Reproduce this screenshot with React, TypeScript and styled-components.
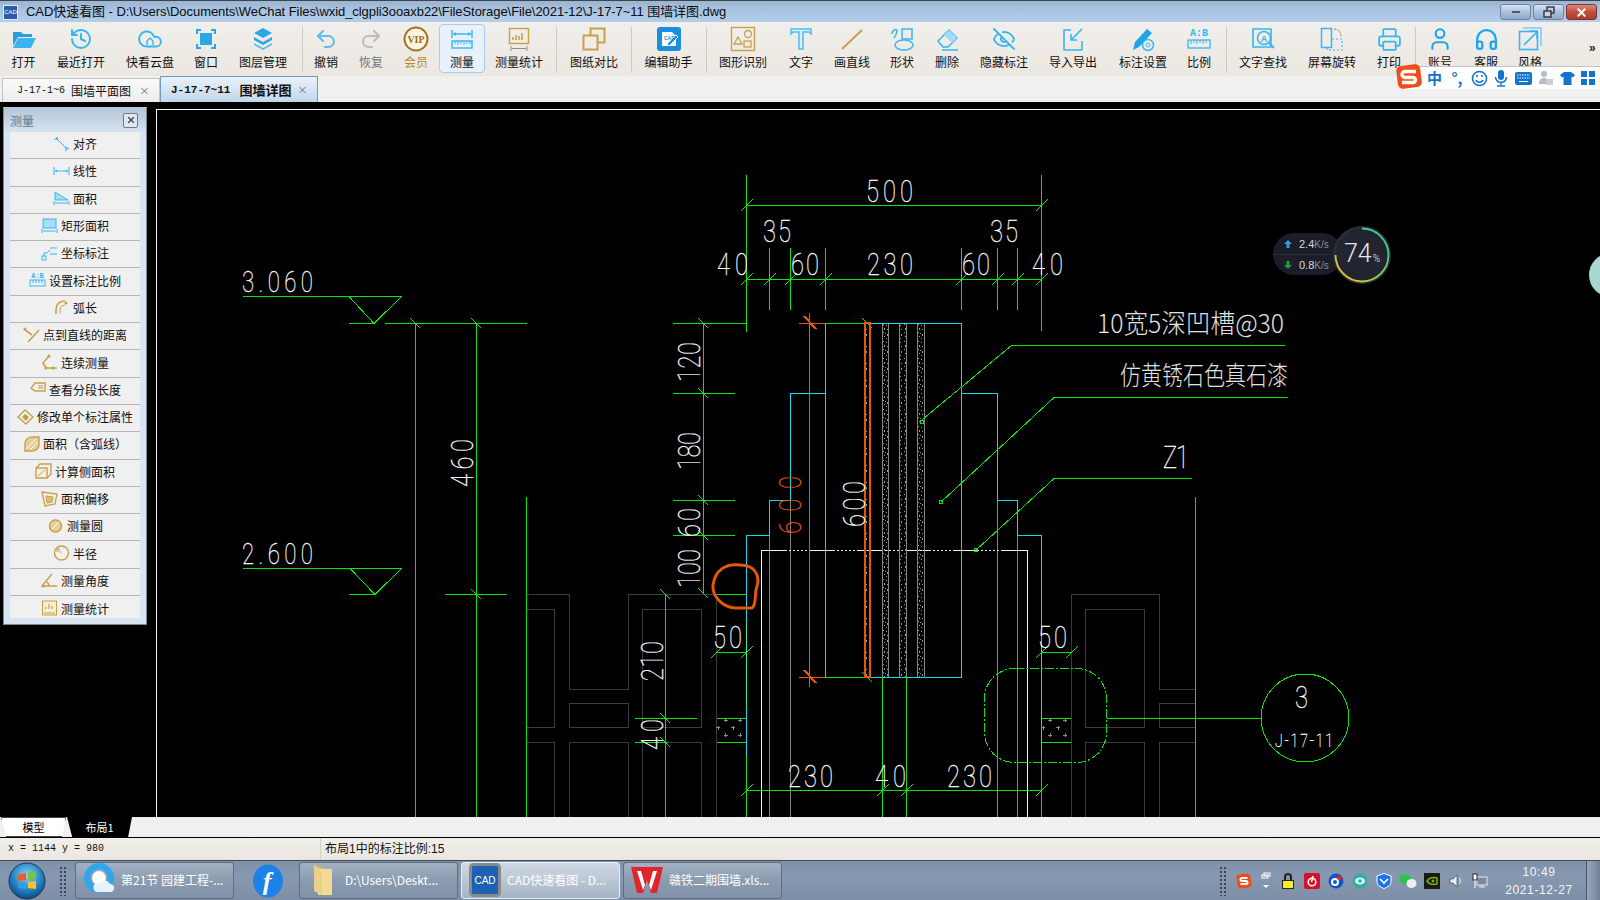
import React from 'react';
import styled, { createGlobalStyle } from 'styled-components';
import { History, Undo2, Redo2, EyeOff, Printer, User, Headphones, Cloud, X, Minus } from 'lucide-react';

const CJK = `"Noto Sans CJK SC", "Liberation Sans", sans-serif`;
const LATIN = `"Liberation Sans", "Noto Sans CJK SC", sans-serif`;
const MONO = `"Liberation Mono", "Noto Sans CJK SC", monospace`;
const B = '#36b6f3';
const G = '#c8a04a';

const Global = createGlobalStyle`
  html, body { margin: 0; padding: 0; background: #000; }
  * { box-sizing: border-box; }
`;

const Page = styled.div`
  position: relative; width: 1600px; height: 900px; overflow: hidden;
  display: flex; flex-direction: column; font-family: ${CJK}; background: #000;
`;

/* ---------- title bar ---------- */
const TitleBar = styled.div`
  height: 22px; flex: none; display: flex; align-items: center; padding: 1px 3px 0 3px;
  border-top: 1px solid #3c4450;
  background: linear-gradient(#9cb5d0, #a8c4e2 45%, #b4cde8);
`;
const TitleIcon = styled.div`
  width: 15px; height: 15px; flex: none; background: #2c5da8; border: 1px solid #dfe8f4; color: #fff;
  font: 6px/13px ${LATIN}; text-align: center;
`;
const TitleText = styled.div`
  margin-left: 8px; font: 13px/18px ${LATIN}; letter-spacing: -0.06px; color: #0c0c0c; white-space: nowrap; flex: 1;
`;
const WinBtn = styled.div<{ $close?: boolean }>`
  width: 31px; height: 16px; margin-left: 2px; border: 1px solid ${p => (p.$close ? '#7a3a30' : '#6f84a0')};
  border-radius: 3px; display: flex; align-items: center; justify-content: center; color: ${p => (p.$close ? '#fff' : '#333')};
  background: ${p => (p.$close ? 'linear-gradient(#dc8a7c, #c0503f 50%, #b03a28)' : 'linear-gradient(#d4e1f0, #aac2dc 50%, #8ea9c8)')};
`;

/* ---------- toolbar ---------- */
const Toolbar = styled.div`
  height: 54px; flex: none; display: flex; padding-left: 3px;
  background: linear-gradient(#f1efeb, #ebe7e1);
`;
const ToolItem = styled.div<{ $w: number; $active?: boolean }>`
  width: ${p => p.$w}px; height: 49px; margin-top: 2px; padding-top: 1px; flex: none;
  display: flex; flex-direction: column; align-items: center;
  border-radius: 4px;
  border: 1px solid ${p => (p.$active ? '#a9cbf2' : 'transparent')};
  background: ${p => (p.$active ? '#e8f1fb' : 'transparent')};
`;
const ToolIcon = styled.div`
  width: 26px; height: 26px; display: flex; align-items: center; justify-content: center; margin-bottom: 2px;
`;
const ToolLabel = styled.div<{ $color?: string }>`
  font-size: 12px; line-height: 16px; color: ${p => p.$color || '#111'}; white-space: nowrap;
`;
const Sep = styled.div<{ $ml: number }>`
  width: 1px; height: 46px; margin: 5px 0 0 ${p => p.$ml}px; background: #cfcbc4; flex: none;
`;
const More = styled.div`
  margin-left: 37px; font: bold 12px/52px ${LATIN}; color: #222;
`;

/* ---------- document tabs ---------- */
const TabStrip = styled.div`
  height: 26px; flex: none; display: flex; align-items: flex-end; padding-left: 2px; background: #f0f0f0;
`;
const DocTab = styled.div<{ $active?: boolean }>`
  width: 158px; height: ${p => (p.$active ? 26 : 24)}px; display: flex; align-items: center;
  gap: ${p => (p.$active ? 9 : 6)}px;
  padding-left: ${p => (p.$active ? 10 : 14)}px; position: relative;
  font-weight: ${p => (p.$active ? 'bold' : 'normal')}; color: #111; white-space: nowrap;
  border: 1px solid ${p => (p.$active ? '#6f97c8' : '#c4c4c4')}; border-bottom: none;
  background: ${p => (p.$active ? 'linear-gradient(#eaf1f9, #c2d6ec)' : 'linear-gradient(#fafafa, #ececec)')};
`;
const TabCode = styled.span<{ $active?: boolean }>`
  font: inherit; font-family: ${MONO}; font-size: ${p => (p.$active ? 11 : 10)}px;
`;
const TabName = styled.span<{ $active?: boolean }>`
  font-family: ${CJK}; font-size: ${p => (p.$active ? 13 : 12)}px;
`;
const TabClose = styled.span`
  position: absolute; right: 9px; top: 50%; transform: translateY(-50%); display: flex; color: #666;
`;

/* ---------- workspace ---------- */
const Workspace = styled.div`
  position: relative; flex: 1; display: flex; align-items: flex-start; padding: 5px 0 0 3px; background: #000;
`;
const Panel = styled.div`
  width: 144px; height: 518px; flex: none; display: flex; flex-direction: column;
  background: #d8e4f2; border: 1px solid #7f8894; border-top: 1px solid #b6c8da;
`;
const PanelHead = styled.div`
  height: 24px; flex: none; display: flex; align-items: center; justify-content: space-between; padding: 0 8px 0 6px;
  background: linear-gradient(#b4c6d8, #d6e2ef);
  font-size: 12px; color: #66788a;
`;
const PanelClose = styled.div`
  width: 15px; height: 15px; border: 1px solid #6c7c90; border-radius: 2px; background: #dfe8f2;
  display: flex; align-items: center; justify-content: center; color: #444;
`;
const PanelList = styled.div`
  margin: 0 6px; background: #f0f0f0; height: 486px; overflow: hidden;
`;
const PanelRow = styled.div`
  height: 27.3px; display: flex; align-items: center; justify-content: center; gap: 3px; padding-bottom: 3px;
  border-bottom: 1px solid #b5b5b5; font-size: 12px; color: #111; white-space: nowrap;
  &:last-child { border-bottom: none; }
`;
const Canvas = styled.div`
  flex: 1; height: 708px; margin: 2px 0 0 9px; border-left: 1px solid #f4f4f4; border-top: 1px solid #f4f4f4; background: #000; overflow: hidden;
`;
const Drawing = styled.svg`
  display: block; width: 100%; height: 100%;
`;
const DimText = styled.text<{ $c?: string }>`
  font-family: "Roboto", "Liberation Sans", sans-serif; font-weight: 100;
  fill: ${p => p.$c || '#fff'}; stroke: ${p => p.$c || '#fff'}; stroke-width: 0.3px;
`;
const NoteText = styled.text`
  font-family: ${CJK}; font-weight: 300; fill: #e2e2e2;
`;

/* network meter */
const Meter = styled.div`
  position: absolute; left: 1273px; top: 131px; width: 70px; height: 42px; border-radius: 21px;
  background: #1b1e28; color: #d8dade; font-size: 11px;
`;
const MeterRow = styled.div`
  height: 21px; display: flex; align-items: center; gap: 7px; padding-left: 11px; font: 11px ${LATIN};
  & + & { border-top: 1px solid #2a2d38; }
`;
const MeterUnit = styled.span`
  font-size: 10px; color: #8d909a;
`;
const Gauge = styled.div`
  position: absolute; left: 1332px; top: 123px; width: 60px; height: 60px;
`;
const GaugeValue = styled.div`
  position: absolute; inset: 0; display: flex; align-items: baseline; justify-content: center; padding-top: 14px;
  font: 300 25px/30px "Roboto", ${LATIN}; color: #e4e6ea;
`;
const GaugePct = styled.span`
  font-size: 10px; margin-left: 1px;
`;
const EdgeBall = styled.div`
  position: absolute; left: 1589px; top: 151px; width: 44px; height: 44px; border-radius: 50%; background: #a8d6d0;
`;

/* IME bar */
const ImeBar = styled.div`
  position: absolute; left: 1404px; top: 66px; width: 196px; height: 23px; display: flex; align-items: center;
  background: #fff; border-top: 1px solid #c4c4c4; padding-left: 19px; gap: 0;
`;
const ImeLogo = styled.div`
  position: absolute; left: 1396px; top: 63px; width: 26px; height: 27px;
`;
const ImeCell = styled.div<{ $w?: number }>`
  width: ${p => p.$w || 22}px; height: 22px; display: flex; align-items: center; justify-content: center; flex: none;
  font: bold 15px/22px ${CJK}; color: #1274cc;
`;

/* ---------- sheets / status ---------- */
const SheetBar = styled.div`
  height: 21px; flex: none; display: flex; background: #f0f0f0; border-bottom: 1px solid #000; position: relative;
`;
const SheetTabs = styled.div`
  display: flex; margin-left: 1px; height: 20px;
`;
const SheetTab = styled.div<{ $dark?: boolean }>`
  width: 65px; height: 20px; margin-left: ${p => (p.$dark ? '1px' : '0')};
  display: flex; align-items: center; justify-content: center; font-size: 11px; padding-bottom: 1px;
  color: ${p => (p.$dark ? '#fff' : '#000')}; background: ${p => (p.$dark ? '#000' : '#fff')};
  clip-path: polygon(0 0, 100% 0, 94% 100%, 8% 100%);
  ${p => (p.$dark ? '' : 'box-shadow: inset 0 0 0 1px #444;')}
`;
const StatusBar = styled.div`
  height: 22px; flex: none; display: flex; align-items: center; background: linear-gradient(#f1efec, #ebe6e0);
`;
const Coord = styled.div`
  width: 321px; height: 100%; padding-left: 8px; font: 10px/22px ${MONO}; color: #111; border-right: 1px solid #d4d0ca;
`;
const StatusMsg = styled.div`
  margin-left: 4px; font: 12px/22px ${LATIN}; color: #111;
`;

/* ---------- taskbar ---------- */
const Taskbar = styled.div`
  height: 40px; flex: none; display: flex; align-items: center; border-top: 1px solid #3f4a58;
  background: linear-gradient(#7f91a8, #8799b0 40%, #7d8fa6); color: #fff;
`;
const StartArea = styled.div`
  width: 75px; height: 100%; display: flex; align-items: center; padding-left: 8px; gap: 13px; flex: none;
`;
const Grip = styled.div`
  width: 8px; height: 30px; flex: none;
  background-image: radial-gradient(#3a4654 1px, transparent 1.2px); background-size: 4px 4px;
`;
const TrayGrip = styled(Grip)`
  margin-right: 5px;
`;
const TaskBtn = styled.div<{ $active?: boolean }>`
  width: 159px; height: 37px; flex: none; display: flex; align-items: center; margin-right: 3px;
  border: 1px solid ${p => (p.$active ? '#e6ecf4' : '#5e6d80')}; border-radius: 3px; font-size: 12px; padding-bottom: 2px; color: #fff; white-space: nowrap;
  background: ${p => (p.$active ? 'linear-gradient(#d0d9e4, #a6b4c6)' : 'linear-gradient(#a3b1c3, #8b9bb0 50%, #8192a8)')};
`;
const TaskIcon = styled.div`
  width: 45px; height: 100%; display: flex; align-items: center; justify-content: center; flex: none;
`;
const FlashSlot = styled.div`
  width: 62px; flex: none; display: flex; justify-content: center;
`;
const Tray = styled.div`
  margin-left: auto; display: flex; align-items: center; height: 100%;
`;
const TrayCell = styled.div<{ $w?: number }>`
  width: ${p => p.$w || 24}px; height: 100%; display: flex; align-items: center; justify-content: center;
`;
const Clock = styled.div`
  width: 94px; text-align: center; font: 12px/18px ${LATIN}; color: #f2f4f7; letter-spacing: .6px;
`;
const ShowDesktop = styled.div`
  width: 14px; height: 100%; border-left: 1px solid #4a5666; background: linear-gradient(90deg, #98a8bb, #6f8096);
`;

/* ---------- toolbar icons ---------- */
const S: React.FC<{ children: React.ReactNode; vb?: string; s?: number }> = ({ children, vb = '0 0 26 26', s = 26 }) => (
  <svg width={s} height={s} viewBox={vb} fill="none">{children}</svg>
);
const toolIcons: Record<string, React.ReactNode> = {
  open: <S><path d="M2 6h8l2 2h9v3H7l-5 9z" fill="#2a9fe0" /><path d="M7 12h18l-5 10H2z" fill="#3db4f0" /></S>,
  recent: <History size={24} color={B} strokeWidth={2} />,
  cloud: <S><Cloud x={0} y={0} width={26} height={26} color={B} strokeWidth={1.8} /><path d="M10 19v-4l3-3 3 3v4" stroke={B} strokeWidth="1.4" /></S>,
  window: <S><path d="M4 8V4h4M18 4h4v4M22 18v4h-4M8 22H4v-4" stroke="#2ba7e6" strokeWidth="2" /><rect x="7" y="7" width="12" height="12" fill="#2ba7e6" /></S>,
  layers: <S><path d="M13 2l9 5-9 5-9-5z" fill="#2ba7e6" /><path d="M4 11l9 5 9-5v3l-9 5-9-5z" fill="#2ba7e6" /><path d="M4 17l9 5 9-5v2l-9 5-9-5z" fill="#58bfee" /></S>,
  undo: <Undo2 size={24} color="#5cbdf0" strokeWidth={2} />,
  redo: <Redo2 size={24} color="#bdbdbd" strokeWidth={2} />,
  vip: <S><circle cx="13" cy="13" r="11.5" fill="#fbf5e4" stroke="#a8741c" strokeWidth="2" /><text x="13" y="16.5" textAnchor="middle" fontFamily="Liberation Serif, serif" fontWeight="bold" fontSize="10" fill="#a06d10">VIP</text></S>,
  measure: <S><path d="M3 4v8M23 4v8M4 8h18" stroke={B} strokeWidth="1.4" /><path d="M7 6L4 8l3 2zM19 6l3 2-3 2z" fill={B} /><rect x="3" y="15" width="20" height="7" stroke={B} strokeWidth="1.4" /><path d="M6 15v3M9 15v4M12 15v3M15 15v4M18 15v3M21 15v3" stroke={B} /></S>,
  stats: <S><rect x="3.5" y="2.5" width="19" height="15" stroke={G} strokeWidth="1.4" /><path d="M7 14v-3M10 14V9M13 14v-4M16 14V7" stroke={G} strokeWidth="1.6" /><path d="M5 20v5M21 20v5M6 22.5h14" stroke="#8a8a8a" /></S>,
  compare: <S><rect x="9.5" y="2.5" width="14" height="14" stroke={G} strokeWidth="2" /><rect x="2.5" y="9.5" width="14" height="14" fill="#f0ede8" stroke={G} strokeWidth="2" /></S>,
  editor: <S><rect x="1" y="1" width="24" height="24" rx="3" fill="#1a8ee0" /><path d="M6 6h10l4 4v10H6z" fill="#fff" /><path d="M11 18l9-9 2 2-9 9z" fill="#1a8ee0" stroke="#fff" /><text x="8" y="14" fontFamily="Liberation Sans" fontSize="5" fontWeight="bold" fill="#1a8ee0">CAD</text></S>,
  shape: <S><rect x="1.5" y="1.5" width="23" height="23" stroke={G} strokeWidth="1.4" /><path d="M7 11l4 7H3z" stroke={G} strokeWidth="1.3" transform="translate(1 0)" /><circle cx="18" cy="8" r="3.5" stroke={G} strokeWidth="1.3" /><rect x="14" y="15" width="7" height="6" stroke={G} strokeWidth="1.3" /></S>,
  text: <S><path d="M3 3h20v5l-2-2h-6v17h-4V6H5L3 8z" stroke="#49bdf5" strokeWidth="1.5" fill="#d9f0fc" /></S>,
  line: <S><path d="M3 23L23 4" stroke={G} strokeWidth="2" /></S>,
  shapes: <S><rect x="13" y="3" width="10" height="10" stroke={B} strokeWidth="1.5" /><ellipse cx="15" cy="19" rx="9" ry="5" stroke={B} strokeWidth="1.5" /><path d="M3 8c0-4 5-6 5-3s-3 7-3 7" stroke={B} strokeWidth="1.5" /></S>,
  erase: <S><path d="M4 15L15 4l8 8-9 9H9z" stroke={B} strokeWidth="1.5" /><path d="M15 4l8 8-5 5-8-8z" fill="#a4dcf8" /><path d="M8 24h16" stroke={B} strokeWidth="1.5" /></S>,
  eye: <EyeOff size={24} color={B} strokeWidth={1.8} />,
  io: <S><path d="M11 4H4v20h18v-9" stroke={B} strokeWidth="1.6" fill="none" strokeLinejoin="round" /><path d="M22 3L11 14M11 8v6h6" stroke={B} strokeWidth="1.6" /></S>,
  anno: <S><path d="M3 24l2-8L17 3l5 4L9 21z" fill="#1ea4ea" /><circle cx="18" cy="19" r="5.5" fill="#f0ede8" stroke={B} strokeWidth="1.5" /><circle cx="18" cy="19" r="2" stroke={B} /></S>,
  scale: <S><text x="13" y="10" textAnchor="middle" fontFamily="Liberation Mono" fontWeight="bold" fontSize="10" fill={B}>A:B</text><rect x="2" y="14" width="22" height="8" stroke={B} strokeWidth="1.3" /><path d="M5 14v4M8 14v3M11 14v4M14 14v3M17 14v4M20 14v3" stroke={B} /></S>,
  find: <S><path d="M3 3h18v18H3z" stroke={B} strokeWidth="1.6" /><circle cx="14" cy="12" r="6.5" fill="#f0ede8" stroke={B} strokeWidth="1.5" /><path d="M19 17l5 5" stroke={B} strokeWidth="2" /><text x="14" y="15.5" textAnchor="middle" fontFamily="Liberation Sans" fontSize="9" fontWeight="bold" fill={B}>A</text></S>,
  rotate: <S><rect x="2.5" y="2.5" width="10" height="19" stroke={B} strokeWidth="1.5" /><path d="M13 13h10v11H8v-2" stroke={B} strokeDasharray="2 2" /><path d="M15 3c4 0 7 3 7 7" stroke="#888" strokeDasharray="2 1" /></S>,
  print: <Printer size={25} color={B} strokeWidth={1.7} />,
  user: <User size={26} color="#1ca5f0" strokeWidth={2} />,
  service: <Headphones size={25} color="#1ca5f0" strokeWidth={2.2} />,
  style: <S><path d="M6 2h18v18" stroke="#7acdf5" strokeWidth="1.6" /><rect x="2.5" y="5.5" width="18" height="18" stroke={B} strokeWidth="1.6" /><path d="M7 19L20 6M12 5h8v8" stroke={B} strokeWidth="1.6" /></S>,
};

type Tool = { w: number; label: string; icon: string; sep?: number; active?: boolean; color?: string };
const tools: Tool[] = [
  { w: 41, label: '打开', icon: 'open' },
  { w: 74, label: '最近打开', icon: 'recent' },
  { w: 64, label: '快看云盘', icon: 'cloud' },
  { w: 48, label: '窗口', icon: 'window' },
  { w: 66, label: '图层管理', icon: 'layers' },
  { w: 46, label: '撤销', icon: 'undo', sep: 6 },
  { w: 44, label: '恢复', icon: 'redo', color: '#777' },
  { w: 46, label: '会员', icon: 'vip', color: '#b98a2c' },
  { w: 46, label: '测量', icon: 'measure', active: true },
  { w: 68, label: '测量统计', icon: 'stats' },
  { w: 74, label: '图纸对比', icon: 'compare', sep: 3 },
  { w: 73, label: '编辑助手', icon: 'editor', sep: 0 },
  { w: 72, label: '图形识别', icon: 'shape', sep: 1 },
  { w: 44, label: '文字', icon: 'text' },
  { w: 58, label: '画直线', icon: 'line' },
  { w: 42, label: '形状', icon: 'shapes' },
  { w: 48, label: '删除', icon: 'erase' },
  { w: 66, label: '隐藏标注', icon: 'eye' },
  { w: 72, label: '导入导出', icon: 'io' },
  { w: 68, label: '标注设置', icon: 'anno' },
  { w: 44, label: '比例', icon: 'scale' },
  { w: 72, label: '文字查找', icon: 'find', sep: 5 },
  { w: 66, label: '屏幕旋转', icon: 'rotate' },
  { w: 48, label: '打印', icon: 'print' },
  { w: 48, label: '账号', icon: 'user', sep: 2 },
  { w: 44, label: '客服', icon: 'service' },
  { w: 44, label: '风格', icon: 'style' },
];

/* ---------- measure panel icons ---------- */
const P: React.FC<{ children: React.ReactNode }> = ({ children }) => (
  <svg width="17" height="16" viewBox="0 0 17 16" fill="none" style={{ flex: 'none' }}>{children}</svg>
);
const rows: { t: string; i: React.ReactNode }[] = [
  { t: '对齐', i: <P><path d="M3 2l11 11" stroke={B} /><path d="M1 4l4-3M12 15l4-3" stroke={B} /><circle cx="4" cy="3" r="1.2" fill={B} /><circle cx="13" cy="12" r="1.2" fill={B} /></P> },
  { t: '线性', i: <P><path d="M1 4v8M16 4v8M2 8h13" stroke={B} /><path d="M4 6.5L2 8l2 1.5zM13 6.5L15 8l-2 1.5z" fill={B} /></P> },
  { t: '面积', i: <P><path d="M2 2l13 8H2z" fill="#a8dcf8" stroke={B} /><path d="M1 11v4M16 11v4M2 13h13" stroke={B} /></P> },
  { t: '矩形面积', i: <P><rect x="2" y="1" width="13" height="9" fill="#a8dcf8" stroke={B} /><path d="M1 11v4M16 11v4M2 13h13" stroke={B} /></P> },
  { t: '坐标标注', i: <P><rect x="1" y="11" width="4" height="4" stroke={B} /><path d="M3 11V8h3l3-3M9 9h7M9 3h7" stroke={B} /></P> },
  { t: '设置标注比例', i: <P><text x="8.5" y="6" textAnchor="middle" fontFamily="Liberation Mono" fontWeight="bold" fontSize="7" fill={B}>A:B</text><rect x="1" y="8" width="15" height="6" stroke={B} /><path d="M4 8v3M7 8v3M10 8v3M13 8v3" stroke={B} /></P> },
  { t: '弧长', i: <P><path d="M3 15V10c0-5 4-8 9-8" stroke={G} strokeWidth="1.6" /><path d="M7 15v-4c0-3 2-5 5-5" stroke={G} /><circle cx="13" cy="4" r="1.5" fill={G} /></P> },
  { t: '点到直线的距离', i: <P><path d="M1 2l8 6M16 3L5 15" stroke={G} strokeWidth="1.6" /><circle cx="2" cy="2" r="1.5" fill={G} /></P> },
  { t: '连续测量', i: <P><path d="M8 2L2 9l3 5h11" stroke={G} strokeWidth="1.6" /><circle cx="8" cy="2" r="1.6" fill={G} /><circle cx="5" cy="14" r="1.6" fill={G} /><circle cx="12" cy="14" r="1.6" fill={G} /></P> },
  { t: '查看分段长度', i: <P><path d="M6 2h10v8H6L2 7z" stroke={G} strokeWidth="1.4" /><path d="M9 5h5M9 7h5" stroke={G} /></P> },
  { t: '修改单个标注属性', i: <P><path d="M1 8l7-7 8 7-7 7z" stroke={G} strokeWidth="1.4" /><path d="M5 8l3-3 4 3-3 4z" fill={G} /></P> },
  { t: '面积（含弧线）', i: <P><path d="M2 15V7c0-4 4-6 8-6h6v8c0 3-3 6-7 6z" fill="#e6cf9a" stroke={G} strokeWidth="1.4" /><path d="M3 13L13 3M7 14l8-8" stroke="#fff" /></P> },
  { t: '计算侧面积', i: <P><path d="M1 5h11v10H1zM1 5l4-4h11v10l-4 4" stroke={G} strokeWidth="1.4" /><path d="M3 13l7-6" stroke={G} /></P> },
  { t: '面积偏移', i: <P><path d="M1 1l15 2-2 10-10 2z" stroke={G} strokeWidth="1.3" /><path d="M5 5l7 1-1 5-5 1z" fill="#d8bc78" stroke={G} /></P> },
  { t: '测量圆', i: <P><circle cx="8.5" cy="8" r="6" fill="#e6cf9a" stroke={G} strokeWidth="1.5" /><path d="M5 11l7-7" stroke="#fff" /></P> },
  { t: '半径', i: <P><circle cx="8.5" cy="8" r="7" stroke={G} strokeWidth="1.4" /><path d="M8.5 8L4 4M4 7V4h3" stroke={G} /></P> },
  { t: '测量角度', i: <P><path d="M1 14L11 2M1 14h15M8 14c0-2-1-3-2-4" stroke={G} strokeWidth="1.5" /><circle cx="2" cy="14" r="1.5" fill={G} /></P> },
  { t: '测量统计', i: <P><rect x="1.5" y="1" width="14" height="14" fill="#f6efd8" stroke={G} /><path d="M5 9V7M8 9V4M11 9V6M3 13h11" stroke={G} strokeWidth="1.2" /></P> },
];

/* ---------- CAD drawing ---------- */
const GREEN = '#0ae60a';
const CYAN = '#12d8f0';
const GRAY = '#3c3c3c';
const MID = '#868686';
const ORANGE = '#e8560a';

const T: React.FC<{ x1: number; x2: number; y: number; s: string; size?: number }> = ({ x1, x2, y, s, size = 32 }) => {
  const k = 0.74;
  return (
    <DimText transform={`translate(${x1} ${y}) scale(${k} 1)`} fontSize={size} textLength={(x2 - x1) / k} lengthAdjust="spacing">
      {s}
    </DimText>
  );
};
const R: React.FC<{ x: number; y1: number; y2: number; s: string; c?: string }> = ({ x, y1, y2, s, c }) => {
  const k = 0.74;
  return (
    <DimText $c={c} transform={`translate(${x} ${y1}) rotate(-90) scale(${k} 1)`} fontSize={32} textLength={(y1 - y2) / k} lengthAdjust="spacing">
      {s}
    </DimText>
  );
};
const ticksUp: [number, number][] = [
  [746.5, 205.5], [1041.5, 205.5],
  [746.5, 279.5], [769.5, 279.5], [790.5, 279.5], [825.5, 279.5], [961.5, 279.5], [997.5, 279.5], [1017.5, 279.5], [1041.5, 279.5],
  [746.5, 790.5], [882.5, 790.5], [906.5, 790.5], [1041.5, 790.5],
  [716.5, 652.5], [746.5, 652.5], [1041.5, 652.5], [1071.5, 652.5],
];
const ticksDown: [number, number][] = [
  [415.5, 323.5], [476.5, 323.5], [476.5, 594.5],
  [703.5, 323.5], [703.5, 393.5], [703.5, 500.5], [703.5, 535.5], [703.5, 593.5],
  [665.5, 594.5], [665.5, 718.5], [665.5, 742.5],
  [867.5, 323.5], [867.5, 677.5],
];
const greenD = [
  'M746.5 175V332M1041.5 175V331M746 205.5H1042M746 279.5H1042',
  'M769.5 248V310M790.5 248V310M825.5 248V310M961.5 248V310M997.5 248V310M1017.5 248V310',
  'M673 323.5H746.5M825 323.5H867M825 677.5H867M673 393.5H735M673 500.5H735M673 535.5H735M703.5 323V593',
  'M716.5 594.5H746M716.5 652.5H746M1041.5 652.5H1071',
  'M716.5 718.5H746M716.5 742.5H746M1041.5 718.5H1071M1041.5 742.5H1071',
  'M746.5 756V817M1041.5 756V817M746 790.5H1042M882.5 677V817M906.5 677V817',
  'M243 296.5H401.5M349 296.5L374 323.5L401.5 296.5M349 323.5H375M385 323.5H527',
  'M243 568.5H401.5M350 568.5L375 594.5L401.5 568.5M349 594.5H375M445 594.5H507',
  'M415.5 323V817M476.5 323V817M526.5 497V817M1195.5 497V817',
  'M665.5 594V817M635 718.5H697M635 742.5H668',
  'M920 421.5L1011.5 345.5H1285M941 502L1054 397.5H1288M976 550L1054 478.5H1192',
  'M1107 718.5H1261',
];
const cyanD = [
  'M825.5 677.5V323.5H961.5V677.5H867',
  'M825.5 393.5H790.5V500.5H769.5V535.5H746.5V756',
  'M961.5 393.5H997.5V500.5H1017.5V535.5H1041.5V756',
];
const grayD = [
  'M526 594.5H569.5V689.5H628.5V594.5H716.5V817',
  'M526 609.5H554.5V727.5H526M526 742.5H554.5V817',
  'M569.5 703.5H628.5V727.5H569.5ZM569.5 817V742.5H628.5V817',
  'M642.5 817V742.5H701.5V817M642.5 727.5V609.5H701.5V727.5H642.5',
  'M1195 689.5H1159.5V594.5H1071.5V817',
  'M1085.5 609.5H1144.5V727.5H1085.5ZM1085.5 817V742.5H1144.5V817',
  'M1195 703.5H1159.5V727.5H1195M1195 742.5H1159.5V817',
];
const plus: [number, number][] = [
  [725.5, 720], [740, 720], [718, 727.5], [733, 727.5], [725.5, 735], [740, 735],
  [1043, 727.5], [1050, 720], [1065, 720], [1058, 727.5], [1050, 735], [1065, 735],
];

const DrawingSvg = () => (
  <Drawing viewBox="157 110 1443 707" preserveAspectRatio="none" shapeRendering="crispEdges" fill="none">
    <defs>
      <pattern id="hatch" x="0" y="323" width="7" height="17" patternUnits="userSpaceOnUse">
        <path d="M1 1h1v1H1zM4 2h1v1H4zM2 5h1v2H2zM5 6h1v1H5zM1 9h1v1H1zM3 10h1v1H3zM5 11h1v2H5zM2 13h1v1H2zM4 15h1v1H4z" fill="#9a9a9a" />
      </pattern>
    </defs>

    <path d={grayD.join('')} stroke={GRAY} />
    <path d="M769.5 535V817M790.5 500V817M997.5 500V817M1017.5 535V817" stroke={MID} />
    <path d="M761.5 550V817M1027.5 550V817" stroke="#f2f2f2" />
    <path d="M761 550.500H1028" stroke="#f2f2f2" strokeDasharray="26 2 2 2 2 2 2 2 2 2 2 2" />

    {[882, 899, 917].map(x => (
      <g key={x}>
        <rect x={x} y={323} width={x === 882 ? 6 : 7} height={354} fill="url(#hatch)" />
        <path d={`M${x + 0.5} 323V677M${x + (x === 882 ? 6.5 : 7.5)} 323V677`} stroke={MID} />
      </g>
    ))}
    <rect x={865} y={323} width={6} height={354} fill="url(#hatch)" />

    <path d={cyanD.join('')} stroke={CYAN} />
    <path d={greenD.join('')} stroke={GREEN} />
    <path d="M746.5 622V708" stroke="#2cf0a0" strokeWidth="1.4" />
    {ticksUp.map(([x, y]) => <path key={`u${x}${y}`} d={`M${x - 6} ${y + 6}L${x + 6} ${y - 6}`} stroke={GREEN} />)}
    {ticksDown.map(([x, y]) => <path key={`d${x}${y}`} d={`M${x - 5} ${y - 5}L${x + 5} ${y + 5}`} stroke={GREEN} />)}
    {plus.map(([x, y]) => <path key={`p${x}${y}`} d={`M${x - 2} ${y}H${x + 2}M${x} ${y - 2}V${y + 2}`} stroke="#8a8a8a" />)}

    <rect x={920} y={420} width={3} height={3} stroke={GREEN} />
    <circle cx={941} cy={502} r={1.8} stroke={GREEN} />
    <circle cx={976} cy={550} r={1.8} stroke={GREEN} />
    <rect x={984.5} y={668.5} width={122} height={94} rx={30} stroke={GREEN} strokeDasharray="9 2 2 2" />
    <circle cx={1305} cy={718} r={44} stroke={GREEN} />

    <path d="M864.5 323H870V677H864.5Z" stroke={ORANGE} strokeWidth="2" />
    <path d="M809.5 313V687M799 323.5H825M799 677.5H825" stroke={ORANGE} />
    <path d="M804 316L816 329M804 670L816 683" stroke={ORANGE} strokeWidth="2" />
    <path d="M740 565C726 563 715 570 713 585C712 596 722 607 735 608L752 608C756 606 755 596 756 590L758 582C758 570 750 565 740 565Z" stroke={ORANGE} strokeWidth="3" shapeRendering="auto" />

    <T x1={866} x2={913} y={202} s="500" />
    <T x1={763} x2={791} y={242} s="35" />
    <T x1={990} x2={1018} y={242} s="35" />
    <T x1={717} x2={748} y={275} s="40" />
    <T x1={791} x2={819} y={275} s="60" />
    <T x1={867} x2={913} y={275} s="230" />
    <T x1={962} x2={990} y={275} s="60" />
    <T x1={1032} x2={1063} y={275} s="40" />
    <T x1={242} x2={313} y={292} s="3.060" size={30} />
    <T x1={242} x2={313} y={564} s="2.600" size={30} />
    <R x={700} y1={382} y2={342} s="120" />
    <R x={700} y1={470} y2={432} s="180" />
    <R x={700} y1={537} y2={508} s="60" />
    <R x={700} y1={588} y2={549} s="100" />
    <R x={473} y1={487} y2={439} s="460" />
    <R x={663} y1={681} y2={641} s="210" />
    <R x={663} y1={750} y2={719} s="40" />
    <R x={865} y1={527} y2={481} s="600" />
    <R x={801} y1={534} y2={476} s="600" c={ORANGE} />
    <T x1={713} x2={742} y={648} s="50" />
    <T x1={1038} x2={1067} y={648} s="50" />
    <T x1={788} x2={833} y={787} s="230" />
    <T x1={875} x2={906} y={787} s="40" />
    <T x1={947} x2={992} y={787} s="230" />
    <T x1={1295} x2={1309} y={708} s="3" />
    <T x1={1275} x2={1333} y={747} s="J-17-11" size={19} />
    <T x1={1163} x2={1189} y={468} s="Z1" />
    <NoteText x={1097} y={333} fontSize={26} textLength={187} lengthAdjust="spacingAndGlyphs">10宽5深凹槽@30</NoteText>
    <NoteText x={1120} y={385} fontSize={26} textLength={168} lengthAdjust="spacingAndGlyphs">仿黄锈石色真石漆</NoteText>
  </Drawing>
);

const MeterArrow: React.FC<{ color: string; down?: boolean }> = ({ color, down }) => (
  <svg width="8" height="8" viewBox="0 0 8 8" style={down ? { transform: 'rotate(180deg)' } : undefined}>
    <path d="M4 0L8 4H5.500V8H2.500V4H0z" fill={color} />
  </svg>
);

export default function App() {
  return (
    <Page>
      <Global />
      <TitleBar>
        <TitleIcon>CAD</TitleIcon>
        <TitleText>CAD快速看图 - D:\Users\Documents\WeChat Files\wxid_clgpli3ooaxb22\FileStorage\File\2021-12\J-17-7~11 围墙详图.dwg</TitleText>
        <WinBtn><Minus size={12} strokeWidth={3} /></WinBtn>
        <WinBtn>
          <svg width="12" height="12" viewBox="0 0 12 12" fill="none" stroke="#333" strokeWidth="1.4"><rect x="4" y="1" width="7" height="6" /><rect x="1" y="5" width="7" height="6" fill="#c4d4e6" /></svg>
        </WinBtn>
        <WinBtn $close><X size={13} strokeWidth={3.5} /></WinBtn>
      </TitleBar>

      <Toolbar>
        {tools.map(t => (
          <React.Fragment key={t.label}>
            {t.sep !== undefined && <Sep $ml={t.sep} />}
            <ToolItem $w={t.w} $active={t.active}>
              <ToolIcon>{toolIcons[t.icon]}</ToolIcon>
              <ToolLabel $color={t.color}>{t.label}</ToolLabel>
            </ToolItem>
          </React.Fragment>
        ))}
        <More>»</More>
      </Toolbar>

      <TabStrip>
        <DocTab>
          <TabCode>J-17-1~6</TabCode><TabName>围墙平面图</TabName>
          <TabClose><X size={11} /></TabClose>
        </DocTab>
        <DocTab $active>
          <TabCode $active>J-17-7~11</TabCode><TabName $active>围墙详图</TabName>
          <TabClose><X size={11} /></TabClose>
        </DocTab>
      </TabStrip>

      <Workspace>
        <Panel>
          <PanelHead>
            测量
            <PanelClose><X size={10} strokeWidth={3} /></PanelClose>
          </PanelHead>
          <PanelList>
            {rows.map(r => (
              <PanelRow key={r.t}>{r.i}{r.t}</PanelRow>
            ))}
          </PanelList>
        </Panel>
        <Canvas><DrawingSvg /></Canvas>
        <Meter>
          <MeterRow><MeterArrow color="#2f9fe0" /><span>2.4<MeterUnit>K/s</MeterUnit></span></MeterRow>
          <MeterRow><MeterArrow color="#1f9e3a" down /><span>0.8<MeterUnit>K/s</MeterUnit></span></MeterRow>
        </Meter>
        <Gauge>
          <svg width="60" height="60" viewBox="0 0 60 60" fill="none">
            <defs>
              <linearGradient id="ring" x1="1" y1="0" x2="0" y2="1">
                <stop offset="0" stopColor="#22c4b0" />
                <stop offset=".6" stopColor="#9ad04a" />
                <stop offset=".85" stopColor="#e8c82a" />
                <stop offset="1" stopColor="#e89a30" />
              </linearGradient>
            </defs>
            <circle cx="30" cy="30" r="29" fill="#2a2e3c" />
            <circle cx="30" cy="30" r="26.5" fill="#22252f" />
            <path d="M30 3.500A26.500 26.500 0 1 1 3.500 30" stroke="url(#ring)" strokeWidth="1.800" />
          </svg>
          <GaugeValue>74<GaugePct>%</GaugePct></GaugeValue>
        </Gauge>
        <EdgeBall />
      </Workspace>

      <SheetBar>
        <SheetTabs>
          <SheetTab>模型</SheetTab>
          <SheetTab $dark>布局1</SheetTab>
        </SheetTabs>
      </SheetBar>
      <StatusBar>
        <Coord>x = 1144 y = 980</Coord>
        <StatusMsg>布局1中的标注比例:15</StatusMsg>
      </StatusBar>

      <Taskbar>
        <StartArea>
          <svg width="38" height="38" viewBox="0 0 38 38" style={{ flex: 'none' }}>
            <defs>
              <radialGradient id="orb" cx=".5" cy=".35" r=".7">
                <stop offset="0" stopColor="#8fd4f4" />
                <stop offset=".6" stopColor="#1f7fc0" />
                <stop offset="1" stopColor="#0e3e70" />
              </radialGradient>
            </defs>
            <circle cx="19" cy="19" r="18" fill="url(#orb)" stroke="#1c3a58" />
            <path d="M10 13l8-2v7l-8 1z" fill="#ef5a2a" /><path d="M20 10.500l8 -1.500v8l-8 1z" fill="#7cc242" />
            <path d="M10 21l8-1v7l-8-1z" fill="#2e9fe6" /><path d="M20 20l8-1v8l-8-1z" fill="#fbc02d" />
          </svg>
          <Grip />
        </StartArea>
        <TaskBtn>
          <TaskIcon>
            <svg width="32" height="34" viewBox="0 0 32 34" fill="none"><circle cx="16" cy="15" r="12" stroke="#2fa5ee" strokeWidth="6" /><circle cx="16" cy="15" r="7" fill="#fff" /><path d="M13 29h14a4 4 0 0 0 0-8 5 5 0 0 0-9-1 5 5 0 0 0-5 9z" fill="#e8f2fa" /></svg>
          </TaskIcon>
          第21节 园建工程-...
        </TaskBtn>
        <FlashSlot>
          <svg width="32" height="34" viewBox="0 0 32 34"><ellipse cx="16" cy="17" rx="15" ry="16.500" fill="#1c82e8" /><text x="15" y="26" textAnchor="middle" fontFamily="Liberation Serif, serif" fontStyle="italic" fontWeight="bold" fontSize="26" fill="#fff">f</text></svg>
        </FlashSlot>
        <TaskBtn>
          <TaskIcon>
            <svg width="26" height="34" viewBox="0 0 26 34"><path d="M4 2l10 3v26l-10-3z" fill="#d8b860" /><path d="M8 6h14v26H8z" fill="#f2dc94" /><path d="M4 2l8 6v24l-8-4z" fill="#ead08a" /></svg>
          </TaskIcon>
          D:\Users\Deskt...
        </TaskBtn>
        <TaskBtn $active>
          <TaskIcon>
            <svg width="32" height="34" viewBox="0 0 32 34"><rect x="1.500" y="1.500" width="29" height="31" rx="3" fill="#1c62b4" stroke="#8a8a8a" strokeWidth="3" /><text x="16" y="21" textAnchor="middle" fontFamily="Liberation Sans" fontSize="10" fill="#fff">CAD</text></svg>
          </TaskIcon>
          CAD快速看图 - D...
        </TaskBtn>
        <TaskBtn>
          <TaskIcon>
            <svg width="34" height="30" viewBox="0 0 34 30"><path d="M1 2h32L27 28h-6l-4-13-4 13H7z" fill="#e3242b" /><path d="M7 6h4l4 14-2 5zM27 6h-4l-4 14 2 5z" fill="#fff" /></svg>
          </TaskIcon>
          赣铁二期围墙.xls...
        </TaskBtn>
        <Tray>
          <TrayGrip />
          <TrayCell>
            <svg width="16" height="16" viewBox="0 0 16 16"><rect x="1" y="1" width="14" height="14" rx="3" fill="#ea4e1c" transform="rotate(-8 8 8)" /><path d="M11.500 5H6a1.500 1.500 0 0 0 0 3h4a1.500 1.500 0 0 1 0 3H4.500" stroke="#fff" strokeWidth="2" fill="none" /></svg>
          </TrayCell>
          <TrayCell $w={20}>
            <svg width="10" height="18" viewBox="0 0 10 18" fill="none"><rect x="1" y="3" width="6" height="3" stroke="#fff" /><rect x="3" y="1" width="6" height="3" stroke="#fff" /><path d="M2 13h6l-3 3z" fill="#fff" /></svg>
          </TrayCell>
          <TrayCell>
            <svg width="14" height="18" viewBox="0 0 14 18" fill="none"><path d="M4 9V5a3 3 0 0 1 6 0v4" stroke="#222" strokeWidth="2" /><rect x="1.500" y="8.500" width="11" height="8" fill="#f4ee22" stroke="#222" /></svg>
          </TrayCell>
          <TrayCell>
            <svg width="16" height="16" viewBox="0 0 16 16" fill="none"><rect width="16" height="16" rx="2" fill="#d8102a" /><circle cx="8" cy="9" r="3.800" stroke="#fff" strokeWidth="1.500" /><path d="M9 3L7.500 9" stroke="#fff" strokeWidth="1.500" /></svg>
          </TrayCell>
          <TrayCell>
            <svg width="16" height="16" viewBox="0 0 16 16" fill="none"><circle cx="8" cy="8" r="7.500" fill="#1454c8" /><circle cx="7" cy="9" r="3" stroke="#fff" strokeWidth="2" /><circle cx="11.500" cy="5" r="2.200" fill="#e82020" /></svg>
          </TrayCell>
          <TrayCell>
            <svg width="16" height="16" viewBox="0 0 16 16" fill="none"><circle cx="8" cy="8" r="7.500" fill="#30b0a0" /><ellipse cx="8" cy="8" rx="5" ry="3.500" fill="#dff4f0" /><circle cx="8" cy="8" r="1.800" fill="#30b0a0" /></svg>
          </TrayCell>
          <TrayCell>
            <svg width="16" height="16" viewBox="0 0 16 16" fill="none"><path d="M8 0.500L15 3v5c0 4-3 6-7 7.500C4 14 1 12 1 8V3z" fill="#1a74e8" stroke="#fff" /><path d="M4 6l4 4 4-4" stroke="#fff" strokeWidth="1.600" /></svg>
          </TrayCell>
          <TrayCell>
            <svg width="18" height="16" viewBox="0 0 18 16"><ellipse cx="6" cy="6" rx="6" ry="5" fill="#2fc24a" /><ellipse cx="12.500" cy="10.500" rx="5" ry="4.500" fill="#eceef0" /></svg>
          </TrayCell>
          <TrayCell>
            <svg width="16" height="16" viewBox="0 0 16 16" fill="none"><rect width="16" height="16" fill="#1a1a1a" /><path d="M3 8c2-3 6-4 10-3v6c-4 1-8 0-10-3z" stroke="#76b900" strokeWidth="1.500" /><circle cx="9" cy="8" r="1.500" fill="#76b900" /></svg>
          </TrayCell>
          <TrayCell>
            <svg width="14" height="16" viewBox="0 0 14 16" fill="none"><path d="M1 6h3l4-4v12l-4-4H1z" fill="#e8ebef" stroke="#333" strokeWidth=".6" /><path d="M10.500 5c1 2 1 4 0 6" stroke="#eee" /></svg>
          </TrayCell>
          <TrayCell>
            <svg width="16" height="16" viewBox="0 0 16 16" fill="none"><rect x="5" y="4" width="10" height="8" fill="#7a8aa0" stroke="#e8ebef" /><path d="M7 14h6M10 12v2" stroke="#e8ebef" /><rect x="1" y="1" width="4" height="6" fill="#fff" stroke="#222" /><path d="M3 7v8" stroke="#fff" /></svg>
          </TrayCell>
          <Clock>10:49<br />2021-12-27</Clock>
          <ShowDesktop />
        </Tray>
      </Taskbar>

      <ImeBar>
        <ImeCell $w={23}>中</ImeCell>
        <ImeCell $w={22}>°,</ImeCell>
        <ImeCell $w={22}>
          <svg width="17" height="17" viewBox="0 0 17 17" fill="none" stroke="#1274cc" strokeWidth="1.600"><circle cx="8.500" cy="8.500" r="7" /><path d="M5 10c1 3 6 3 7 0" /><path d="M6 5v2M11 5v2" /></svg>
        </ImeCell>
        <ImeCell $w={22}>
          <svg width="14" height="18" viewBox="0 0 14 18" fill="none"><rect x="4" y="1" width="6" height="10" rx="3" fill="#1274cc" /><path d="M1.500 8a5.500 5.500 0 0 0 11 0M7 14v2M3 17h8" stroke="#1274cc" strokeWidth="1.500" /></svg>
        </ImeCell>
        <ImeCell $w={23}>
          <svg width="17" height="13" viewBox="0 0 17 13"><rect width="17" height="13" rx="2" fill="#1274cc" /><path d="M2 3h13M2 6h13" stroke="#fff" strokeDasharray="1.500 1" /><path d="M4 9.500h9" stroke="#fff" /></svg>
        </ImeCell>
        <ImeCell $w={22}>
          <svg width="14" height="16" viewBox="0 0 14 16"><circle cx="5" cy="4" r="3" fill="#b4bcc4" /><path d="M0 14c0-4 2-6 5-6s5 2 5 6z" fill="#b4bcc4" /><rect x="7" y="9" width="7" height="6" fill="#c8ced4" /></svg>
        </ImeCell>
        <ImeCell $w={21}>
          <svg width="15" height="14" viewBox="0 0 15 14"><path d="M4 1h7l4 3-2 2.500-1.500-1V14h-8V5.500L2 6.500 0 4z" fill="#1274cc" /></svg>
        </ImeCell>
        <ImeCell $w={20}>
          <svg width="14" height="14" viewBox="0 0 14 14" fill="#1274cc"><rect width="6" height="6" /><rect x="8" width="6" height="6" /><rect y="8" width="6" height="6" /><rect x="8" y="8" width="6" height="6" /></svg>
        </ImeCell>
      </ImeBar>
      <ImeLogo>
        <svg width="26" height="27" viewBox="0 0 26 27"><rect x="1" y="2" width="24" height="23" rx="5" fill="#ef4e1b" transform="rotate(-7 13 13)" /><path d="M20 8.500H9a3 3 0 0 0 0 6h8a2.500 2.500 0 0 1 0 5H6" stroke="#fff" strokeWidth="3.400" fill="none" /></svg>
      </ImeLogo>
    </Page>
  );
}
